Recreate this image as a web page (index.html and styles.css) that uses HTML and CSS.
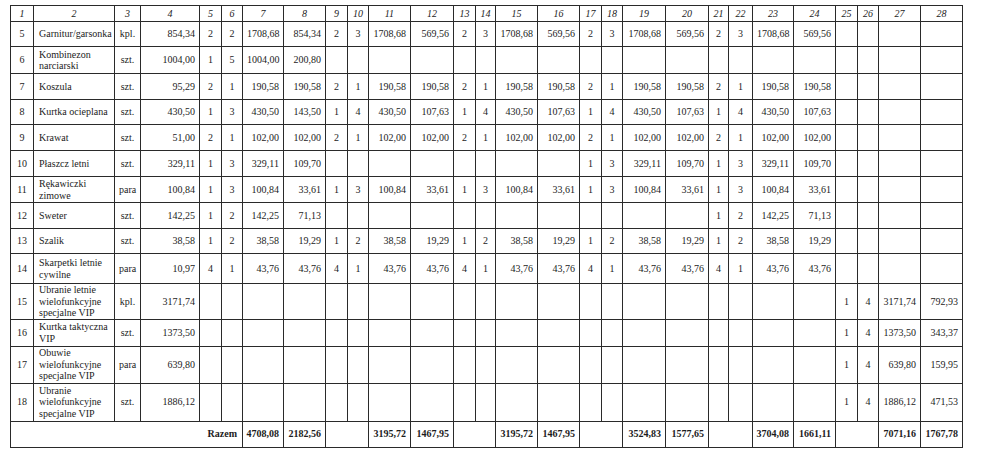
FILE: index.html
```html
<!DOCTYPE html>
<html lang="pl">
<head>
<meta charset="utf-8">
<title>Zestawienie</title>
<link rel="stylesheet" href="styles.css">
</head>
<body>
<table class="grid">
<colgroup>
<col class="w23"><col class="w81"><col class="w26"><col class="w59"><col class="w22"><col class="w21"><col class="w41"><col class="w42"><col class="w22"><col class="w21"><col class="w42"><col class="w43"><col class="w22"><col class="w20"><col class="w42"><col class="w42"><col class="w22"><col class="w21"><col class="w43"><col class="w43"><col class="w20"><col class="w24"><col class="w41"><col class="w42"><col class="w22"><col class="w21"><col class="w42"><col class="w42">
</colgroup>
<thead>
<tr class="head"><th>1</th><th>2</th><th>3</th><th>4</th><th>5</th><th>6</th><th>7</th><th>8</th><th>9</th><th>10</th><th>11</th><th>12</th><th>13</th><th>14</th><th>15</th><th>16</th><th>17</th><th>18</th><th>19</th><th>20</th><th>21</th><th>22</th><th>23</th><th>24</th><th>25</th><th>26</th><th>27</th><th>28</th></tr>
</thead>
<tbody>
<tr class="h25"><td>5</td><td>Garnitur/garsonka</td><td>kpl.</td><td>854,34</td><td>2</td><td>2</td><td>1708,68</td><td>854,34</td><td>2</td><td>3</td><td>1708,68</td><td>569,56</td><td>2</td><td>3</td><td>1708,68</td><td>569,56</td><td>2</td><td>3</td><td>1708,68</td><td>569,56</td><td>2</td><td>3</td><td>1708,68</td><td>569,56</td><td></td><td></td><td></td><td></td></tr>
<tr class="h27"><td>6</td><td>Kombinezon narciarski</td><td>szt.</td><td>1004,00</td><td>1</td><td>5</td><td>1004,00</td><td>200,80</td><td></td><td></td><td></td><td></td><td></td><td></td><td></td><td></td><td></td><td></td><td></td><td></td><td></td><td></td><td></td><td></td><td></td><td></td><td></td><td></td></tr>
<tr class="h26"><td>7</td><td>Koszula</td><td>szt.</td><td>95,29</td><td>2</td><td>1</td><td>190,58</td><td>190,58</td><td>2</td><td>1</td><td>190,58</td><td>190,58</td><td>2</td><td>1</td><td>190,58</td><td>190,58</td><td>2</td><td>1</td><td>190,58</td><td>190,58</td><td>2</td><td>1</td><td>190,58</td><td>190,58</td><td></td><td></td><td></td><td></td></tr>
<tr class="h25"><td>8</td><td>Kurtka ocieplana</td><td>szt.</td><td>430,50</td><td>1</td><td>3</td><td>430,50</td><td>143,50</td><td>1</td><td>4</td><td>430,50</td><td>107,63</td><td>1</td><td>4</td><td>430,50</td><td>107,63</td><td>1</td><td>4</td><td>430,50</td><td>107,63</td><td>1</td><td>4</td><td>430,50</td><td>107,63</td><td></td><td></td><td></td><td></td></tr>
<tr class="h26"><td>9</td><td>Krawat</td><td>szt.</td><td>51,00</td><td>2</td><td>1</td><td>102,00</td><td>102,00</td><td>2</td><td>1</td><td>102,00</td><td>102,00</td><td>2</td><td>1</td><td>102,00</td><td>102,00</td><td>2</td><td>1</td><td>102,00</td><td>102,00</td><td>2</td><td>1</td><td>102,00</td><td>102,00</td><td></td><td></td><td></td><td></td></tr>
<tr class="h26"><td>10</td><td>Płaszcz letni</td><td>szt.</td><td>329,11</td><td>1</td><td>3</td><td>329,11</td><td>109,70</td><td></td><td></td><td></td><td></td><td></td><td></td><td></td><td></td><td>1</td><td>3</td><td>329,11</td><td>109,70</td><td>1</td><td>3</td><td>329,11</td><td>109,70</td><td></td><td></td><td></td><td></td></tr>
<tr class="h26"><td>11</td><td>Rękawiczki zimowe</td><td>para</td><td>100,84</td><td>1</td><td>3</td><td>100,84</td><td>33,61</td><td>1</td><td>3</td><td>100,84</td><td>33,61</td><td>1</td><td>3</td><td>100,84</td><td>33,61</td><td>1</td><td>3</td><td>100,84</td><td>33,61</td><td>1</td><td>3</td><td>100,84</td><td>33,61</td><td></td><td></td><td></td><td></td></tr>
<tr class="h26"><td>12</td><td>Sweter</td><td>szt.</td><td>142,25</td><td>1</td><td>2</td><td>142,25</td><td>71,13</td><td></td><td></td><td></td><td></td><td></td><td></td><td></td><td></td><td></td><td></td><td></td><td></td><td>1</td><td>2</td><td>142,25</td><td>71,13</td><td></td><td></td><td></td><td></td></tr>
<tr class="h25"><td>13</td><td>Szalik</td><td>szt.</td><td>38,58</td><td>1</td><td>2</td><td>38,58</td><td>19,29</td><td>1</td><td>2</td><td>38,58</td><td>19,29</td><td>1</td><td>2</td><td>38,58</td><td>19,29</td><td>1</td><td>2</td><td>38,58</td><td>19,29</td><td>1</td><td>2</td><td>38,58</td><td>19,29</td><td></td><td></td><td></td><td></td></tr>
<tr class="h30"><td>14</td><td>Skarpetki letnie cywilne</td><td>para</td><td>10,97</td><td>4</td><td>1</td><td>43,76</td><td>43,76</td><td>4</td><td>1</td><td>43,76</td><td>43,76</td><td>4</td><td>1</td><td>43,76</td><td>43,76</td><td>4</td><td>1</td><td>43,76</td><td>43,76</td><td>4</td><td>1</td><td>43,76</td><td>43,76</td><td></td><td></td><td></td><td></td></tr>
<tr class="h34"><td>15</td><td>Ubranie letnie wielofunkcyjne specjalne VIP</td><td>kpl.</td><td>3171,74</td><td></td><td></td><td></td><td></td><td></td><td></td><td></td><td></td><td></td><td></td><td></td><td></td><td></td><td></td><td></td><td></td><td></td><td></td><td></td><td></td><td>1</td><td>4</td><td>3171,74</td><td>792,93</td></tr>
<tr class="h27"><td>16</td><td>Kurtka taktyczna VIP</td><td>szt.</td><td>1373,50</td><td></td><td></td><td></td><td></td><td></td><td></td><td></td><td></td><td></td><td></td><td></td><td></td><td></td><td></td><td></td><td></td><td></td><td></td><td></td><td></td><td>1</td><td>4</td><td>1373,50</td><td>343,37</td></tr>
<tr class="h37"><td>17</td><td>Obuwie wielofunkcyjne specjalne VIP</td><td>para</td><td>639,80</td><td></td><td></td><td></td><td></td><td></td><td></td><td></td><td></td><td></td><td></td><td></td><td></td><td></td><td></td><td></td><td></td><td></td><td></td><td></td><td></td><td>1</td><td>4</td><td>639,80</td><td>159,95</td></tr>
<tr class="h38"><td>18</td><td>Ubranie wielofunkcyjne specjalne VIP</td><td>szt.</td><td>1886,12</td><td></td><td></td><td></td><td></td><td></td><td></td><td></td><td></td><td></td><td></td><td></td><td></td><td></td><td></td><td></td><td></td><td></td><td></td><td></td><td></td><td>1</td><td>4</td><td>1886,12</td><td>471,53</td></tr>
<tr class="sum"><td colspan="6" class="label">Razem</td><td>4708,08</td><td>2182,56</td><td colspan="2"></td><td>3195,72</td><td>1467,95</td><td colspan="2"></td><td>3195,72</td><td>1467,95</td><td colspan="2"></td><td>3524,83</td><td>1577,65</td><td colspan="2"></td><td>3704,08</td><td>1661,11</td><td colspan="2"></td><td>7071,16</td><td>1767,78</td></tr>
</tbody>
</table>
</body>
</html>
```

FILE: styles.css
```css
html, body {
  margin: 0;
  padding: 0;
  background: #ffffff;
}

body {
  padding: 5px 0 0 10px;
  font-family: "Liberation Serif", "Times New Roman", serif;
  font-size: 10px;
  color: #1c1c1c;
}

.grid {
  border-collapse: collapse;
  table-layout: fixed;
  width: 953px;
}

.grid th,
.grid td {
  border: 1px solid #2a2a2a;
  padding: 0 4px;
  line-height: 11.5px;
  vertical-align: middle;
  text-align: center;
  overflow: hidden;
}

.grid th {
  font-style: italic;
  font-weight: normal;
}

.head { height: 16px; }
.h25 { height: 25px; }
.h26 { height: 26px; }
.h27 { height: 27px; }
.h30 { height: 30px; }
.h34 { height: 34px; }
.h37 { height: 37px; }
.h38 { height: 38px; }
.sum { height: 26px; }

.grid tbody td:nth-child(2) {
  text-align: left;
  padding-left: 5px;
  padding-right: 3px;
}

.grid tbody td:nth-child(4),
.grid tbody td:nth-child(7),
.grid tbody td:nth-child(8),
.grid tbody td:nth-child(11),
.grid tbody td:nth-child(12),
.grid tbody td:nth-child(15),
.grid tbody td:nth-child(16),
.grid tbody td:nth-child(19),
.grid tbody td:nth-child(20),
.grid tbody td:nth-child(23),
.grid tbody td:nth-child(24),
.grid tbody td:nth-child(27),
.grid tbody td:nth-child(28) {
  text-align: right;
}

.grid tbody .sum td {
  font-weight: bold;
  text-align: right;
  padding-left: 2px;
  padding-right: 4px;
}

.grid tbody .sum td.label {
  padding-right: 5px;
}

.w20 { width: 20px; }
.w21 { width: 21px; }
.w22 { width: 22px; }
.w23 { width: 23px; }
.w24 { width: 24px; }
.w26 { width: 26px; }
.w41 { width: 41px; }
.w42 { width: 42px; }
.w43 { width: 43px; }
.w59 { width: 59px; }
.w81 { width: 81px; }
```
